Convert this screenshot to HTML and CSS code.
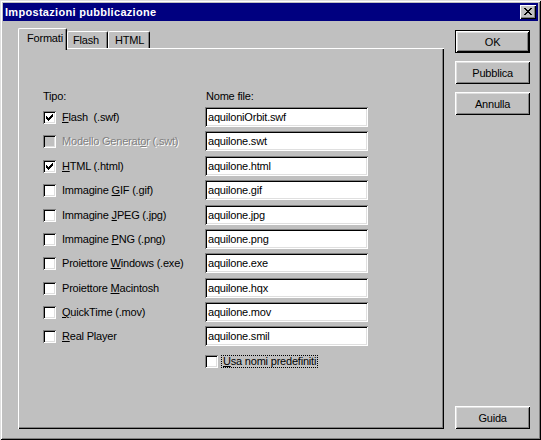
FILE: index.html
```html
<!DOCTYPE html>
<html>
<head>
<meta charset="utf-8">
<link rel="stylesheet" href="styles.css">
</head>
<body>
<div class="window">
  <div class="titlebar">
    <span class="title">Impostazioni pubblicazione</span>
    <span class="close"><svg width="8" height="7" viewBox="0 0 8 7" shape-rendering="crispEdges"><path d="M0 0h2v1h-2zM6 0h2v1h-2zM1 1h2v1h-2zM5 1h2v1h-2zM2 2h4v1h-4zM3 3h2v1h-2zM2 4h4v1h-4zM1 5h2v1h-2zM5 5h2v1h-2zM0 6h2v1h-2zM6 6h2v1h-2z" fill="#000"/></svg></span>
  </div>
  <div class="body">
    <div class="tabs-area">
      <div class="tabstrip">
        <div class="tab selected">Formati</div>
        <div class="tab">Flash</div>
        <div class="tab">HTML</div>
      </div>
      <div class="panel">
        <div class="row head">
          <div class="col1">Tipo:</div>
          <div class="col2 headlabel">Nome file:</div>
        </div>
        <div class="row">
          <div class="col1"><span class="cb"><svg width="7" height="7" viewBox="0 0 7 7" shape-rendering="crispEdges"><path d="M6 0h1v1h-1zM5 1h2v1h-2zM0 2h1v1h-1zM4 2h3v1h-3zM0 3h2v1h-2zM3 3h3v1h-3zM0 4h5v1h-5zM1 5h3v1h-3zM2 6h1v1h-1z" fill="#000"/></svg></span><span class="lbl"><u>F</u>lash&nbsp; (.swf)</span></div>
          <div class="col2"><span class="input">aquiloniOrbit.swf</span></div>
        </div>
        <div class="row wide">
          <div class="col1"><span class="cb disabled"></span><span class="lbl dis">Modello Generat<u>o</u>r (.swt)</span></div>
          <div class="col2"><span class="input">aquilone.swt</span></div>
        </div>
        <div class="row">
          <div class="col1"><span class="cb"><svg width="7" height="7" viewBox="0 0 7 7" shape-rendering="crispEdges"><path d="M6 0h1v1h-1zM5 1h2v1h-2zM0 2h1v1h-1zM4 2h3v1h-3zM0 3h2v1h-2zM3 3h3v1h-3zM0 4h5v1h-5zM1 5h3v1h-3zM2 6h1v1h-1z" fill="#000"/></svg></span><span class="lbl"><u>H</u>TML (.html)</span></div>
          <div class="col2"><span class="input">aquilone.html</span></div>
        </div>
        <div class="row wide">
          <div class="col1"><span class="cb"></span><span class="lbl">Immagine <u>G</u>IF (.gif)</span></div>
          <div class="col2"><span class="input">aquilone.gif</span></div>
        </div>
        <div class="row">
          <div class="col1"><span class="cb"></span><span class="lbl">Immagine <u>J</u>PEG (.jpg)</span></div>
          <div class="col2"><span class="input">aquilone.jpg</span></div>
        </div>
        <div class="row">
          <div class="col1"><span class="cb"></span><span class="lbl">Immagine <u>P</u>NG (.png)</span></div>
          <div class="col2"><span class="input">aquilone.png</span></div>
        </div>
        <div class="row wide">
          <div class="col1"><span class="cb"></span><span class="lbl">Proiettore <u>W</u>indows (.exe)</span></div>
          <div class="col2"><span class="input">aquilone.exe</span></div>
        </div>
        <div class="row">
          <div class="col1"><span class="cb"></span><span class="lbl">Proiettore <u>M</u>acintosh</span></div>
          <div class="col2"><span class="input">aquilone.hqx</span></div>
        </div>
        <div class="row">
          <div class="col1"><span class="cb"></span><span class="lbl"><u>Q</u>uickTime (.mov)</span></div>
          <div class="col2"><span class="input">aquilone.mov</span></div>
        </div>
        <div class="row">
          <div class="col1"><span class="cb"></span><span class="lbl"><u>R</u>eal Player</span></div>
          <div class="col2"><span class="input">aquilone.smil</span></div>
        </div>
        <div class="row extra">
          <div class="col1"></div>
          <div class="col2"><span class="cb"></span><span class="lbl focus"><u>U</u>sa nomi predefiniti</span></div>
        </div>
      </div>
    </div>
    <div class="buttons">
      <div class="btn default"><span class="btn-in">OK</span></div>
      <div class="btn"><span class="btn-in">Pubblica</span></div>
      <div class="btn"><span class="btn-in">Annulla</span></div>
      <div class="spacer"></div>
      <div class="btn"><span class="btn-in">Guida</span></div>
    </div>
  </div>
</div>
</body>
</html>
```

FILE: styles.css
```css
html, body {
  margin: 0;
  padding: 0;
  background: #c0c0c0;
}
body {
  font-family: "Liberation Sans", Arial, sans-serif;
  font-size: 11px;
  letter-spacing: -0.2px;
  color: #000;
}
.window {
  width: 541px;
  height: 440px;
  box-sizing: border-box;
  padding: 3px;
  background: #c0c0c0;
  box-shadow: inset 1px 1px 0 #dfdfdf, inset -1px -1px 0 #000, inset 2px 2px 0 #fff, inset -2px -2px 0 #808080;
  display: flex;
  flex-direction: column;
}
.titlebar {
  height: 18px;
  background: #000080;
  display: flex;
  align-items: center;
  justify-content: space-between;
  padding: 0 2px 0 2px;
  flex: none;
}
.title {
  color: #fff;
  font-weight: bold;
  font-size: 11px;
  letter-spacing: 0.3px;
}
.close {
  width: 16px;
  height: 14px;
  box-sizing: border-box;
  background: #c0c0c0;
  box-shadow: inset 1px 1px 0 #fff, inset -1px -1px 0 #000, inset -2px -2px 0 #808080;
  display: flex;
  align-items: center;
  justify-content: center;
  padding: 0 1px 1px 0;
}
.close svg { display: block; }
.body {
  flex: 1;
  display: flex;
  padding: 7px 8px 8px 15px;
  gap: 11px;
}
.tabs-area {
  width: 427px;
  display: flex;
  flex-direction: column;
}
.tabstrip {
  height: 20px;
  display: flex;
  align-items: flex-end;
  position: relative;
  z-index: 2;
}
.tab {
  height: 17px;
  box-sizing: border-box;
  padding: 0 6px 0 5px;
  line-height: 16px;
  border-top: 1px solid #fff;
  border-left: 1px solid #fff;
  border-right: 1px solid #000;
  border-top-left-radius: 2px;
  border-top-right-radius: 2px;
  box-shadow: inset -1px 0 0 #808080;
  background: #c0c0c0;
}
.tab.selected {
  height: 22px;
  margin-bottom: -2px;
  width: 49px;
  padding: 2px 0 0 8px;
  line-height: 14px;
}
.tab:nth-child(2) { width: 41px; }
.tab:nth-child(3) { width: 42px; padding-left: 6px; }
.panel {
  flex: 1;
  box-sizing: border-box;
  padding: 41px 0 0 25px;
  background: #c0c0c0;
  box-shadow: inset 1px 1px 0 #fff, inset -1px -1px 0 #000, inset -2px -2px 0 #808080;
  display: flex;
  flex-direction: column;
}
.row {
  display: flex;
  height: 20px;
  margin-bottom: 4px;
  align-items: center;
}
.row.wide { margin-bottom: 5px; }
.row.head {
  height: 13px;
  margin-bottom: 5px;
}
.row.extra { margin-top: 1px; }
.col1 {
  width: 162px;
  display: flex;
  align-items: center;
}
.col2 {
  width: 163px;
  display: flex;
  align-items: center;
}
.headlabel { padding-left: 1px; }
.cb {
  width: 13px;
  height: 13px;
  box-sizing: border-box;
  background: #fff;
  box-shadow: inset 1px 1px 0 #808080, inset -1px -1px 0 #fff, inset 2px 2px 0 #000, inset -2px -2px 0 #dfdfdf;
  display: flex;
  align-items: center;
  justify-content: center;
  flex: none;
}
.cb svg { display: block; }
.cb.disabled { background: #c0c0c0; }
.lbl {
  margin-left: 6px;
  white-space: nowrap;
}
.lbl.dis {
  color: #808080;
  text-shadow: 1px 1px 0 #fff;
}
.lbl.focus {
  margin-left: 4px;
  padding: 0 1px;
  outline: 1px dotted #000;
  line-height: 11px;
}
.input {
  width: 163px;
  height: 20px;
  box-sizing: border-box;
  background: #fff;
  box-shadow: inset 1px 1px 0 #808080, inset -1px -1px 0 #fff, inset 2px 2px 0 #000, inset -2px -2px 0 #dfdfdf;
  padding: 0 3px;
  line-height: 20px;
  white-space: nowrap;
}
.buttons {
  width: 75px;
  display: flex;
  flex-direction: column;
  gap: 8px;
  padding-top: 2px;
}
.spacer { flex: 1; }
.btn {
  height: 23px;
  box-sizing: border-box;
  box-shadow: inset 1px 1px 0 #fff, inset -1px -1px 0 #000, inset 2px 2px 0 #dfdfdf, inset -2px -2px 0 #808080;
  display: flex;
  align-items: center;
  justify-content: center;
  text-align: center;
}
.btn.default {
  border: 1px solid #000;
  box-shadow: inset 1px 1px 0 #fff, inset -1px -1px 0 #000, inset 2px 2px 0 #dfdfdf, inset -2px -2px 0 #808080;
}
```
